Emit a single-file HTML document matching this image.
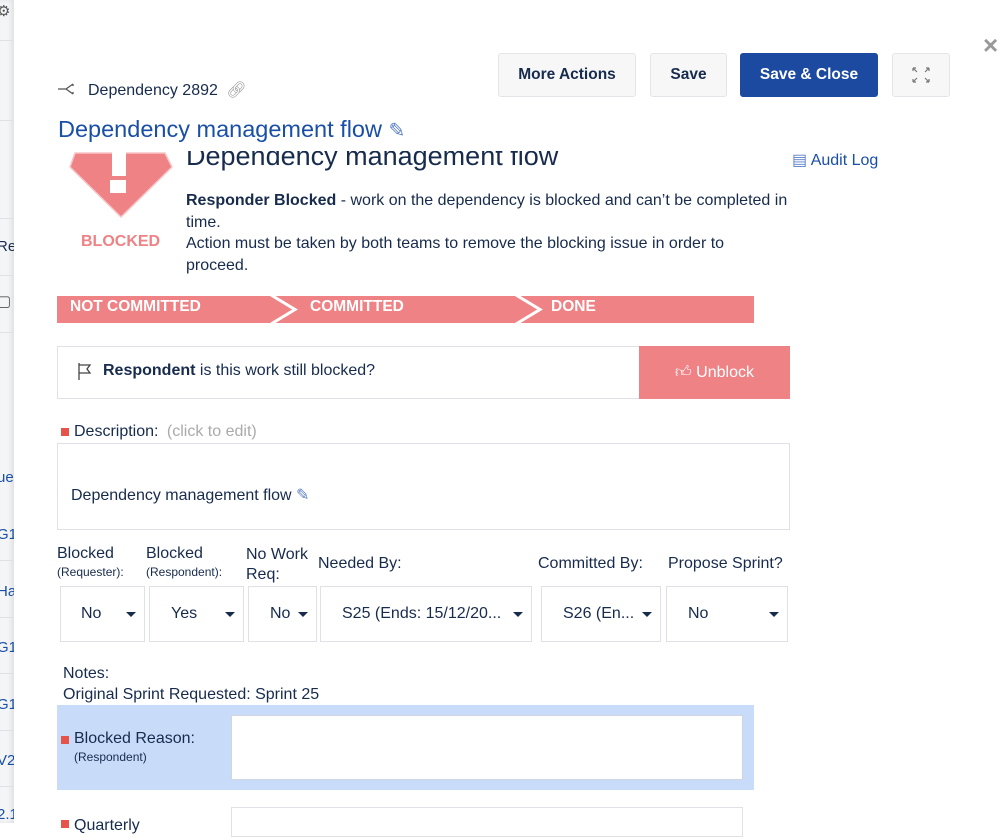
<!DOCTYPE html>
<html><head><style>
*{box-sizing:border-box;margin:0;padding:0}
body{width:999px;height:823px;overflow:hidden;background:#fff;font-family:"Liberation Sans",sans-serif;color:#172b4d;position:relative}
.a{position:absolute}
.strip{left:0;top:0;width:14px;height:823px;background:#f4f5f7;overflow:hidden;box-shadow:inset -3px 0 4px rgba(0,0,0,.08)}
.strip div{position:absolute;left:-3px;font-size:15px;color:#1a4fa8;white-space:nowrap}
.strip hr{position:absolute;left:0;width:14px;border:0;border-top:1px solid #dfe1e6}
.btn{position:absolute;top:53px;height:44px;border:1px solid #e4e5e8;background:#f7f7f8;border-radius:3px;font-size:15.5px;font-weight:bold;display:flex;align-items:center;justify-content:center}
.sel{position:absolute;top:586px;height:56px;border:1px solid #dfe1e6;font-size:16px;display:flex;align-items:center}
.sel .c{position:absolute;right:8px;top:25px;width:0;height:0;border-left:5px solid transparent;border-right:5px solid transparent;border-top:5px solid #172b4d}
.lbl{position:absolute;font-size:16px}
.sm{font-size:12px}
</style></head><body>
<div class="a strip">
<hr style="top:40px"><hr style="top:120px"><hr style="top:218px"><hr style="top:275px"><hr style="top:332px"><hr style="top:560px"><hr style="top:617px"><hr style="top:673px"><hr style="top:730px"><hr style="top:786px">
<div style="top:2px;color:#555">⚙</div>
<div style="top:238px;color:#172b4d">Re</div>
<div style="top:292px;color:#555">▢</div>
<div style="top:469px">ue</div>
<div style="top:526px">G1</div>
<div style="top:583px">Ha</div>
<div style="top:639px">G1</div>
<div style="top:696px">G1</div>
<div style="top:752px">V2</div>
<div style="top:806px">2.1</div>
</div>
<div class="a" style="left:983px;top:30px;font-size:26px;color:#999;font-weight:bold">×</div>

<div class="btn" style="left:498px;width:138px">More Actions</div>
<div class="btn" style="left:650px;width:77px">Save</div>
<div class="btn" style="left:740px;width:138px;background:#1c4aa0;border-color:#1c4aa0;color:#fff">Save &amp; Close</div>
<div class="btn" style="left:892px;width:58px"><svg width="18" height="16" viewBox="0 0 18 16" fill="none" stroke="#777" stroke-width="1.2"><path d="M1 1l4 4M1 1h3M1 1v3M17 1l-4 4M17 1h-3M17 1v3M1 15l4-4M1 15h3M1 15v-3M17 15l-4-4M17 15h-3M17 15v-3"/></svg></div>

<svg class="a" style="left:58px;top:83px" width="18" height="12" viewBox="0 0 18 12" fill="none" stroke="#555" stroke-width="1.3"><path d="M0 6h8M8 6l7-5M8 6l7 5M15 1v2M15 11v-2"/></svg>
<div class="a" style="left:88px;top:80px;font-size:16px">Dependency 2892 <span style="color:#999;margin-left:4px">🔗︎</span></div>
<div class="a" style="left:58px;top:116px;font-size:23.5px;color:#1a4fa8">Dependency management flow <span style="color:#5a7fc8;font-size:20px">✎</span></div>

<div class="a" style="left:0;top:147px;width:999px;height:676px;overflow:hidden">
 <div class="a" style="left:186px;top:-6px;font-size:27px;color:#172b4d">Dependency management flow</div>
 <div class="a" style="left:180px;top:0;width:400px;height:4px;background:#fff"></div>
 <svg class="a" style="left:68px;top:0" width="106" height="72" viewBox="0 0 106 72"><path d="M7 6 L97 6 L104 20 L53 70 L2 20 Z" fill="#ef8285" stroke="#f7c6c7" stroke-width="1.5" stroke-linejoin="round"/><rect x="44" y="0" width="14" height="29" fill="#fff"/><rect x="42" y="33" width="16" height="13" fill="#fff"/></svg>
 <div class="a" style="left:81px;top:86px;font-size:16px;font-weight:bold;color:#ef8285">BLOCKED</div>
 <div class="a" style="left:186px;top:43px;width:602px;font-size:16px;line-height:21.5px"><b>Responder Blocked</b> - work on the dependency is blocked and can’t be completed in time.<br>Action must be taken by both teams to remove the blocking issue in order to proceed.</div>
 <div class="a" style="left:792px;top:3px;font-size:16px;color:#1a4fa8"><span style="color:#5a7fc8">▤</span> Audit Log</div>

 <svg class="a" style="left:57px;top:149px" width="697" height="27"><rect width="697" height="27" fill="#ef8285"/><polyline points="214,-1 238,13.5 214,28" fill="none" stroke="#fff" stroke-width="3"/><polyline points="459,-1 483,13.5 459,28" fill="none" stroke="#fff" stroke-width="3"/></svg>
 <div class="a" style="left:70px;top:151px;font-size:15.5px;font-weight:bold;color:#fff">NOT COMMITTED</div>
 <div class="a" style="left:310px;top:151px;font-size:15.5px;font-weight:bold;color:#fff">COMMITTED</div>
 <div class="a" style="left:551px;top:151px;font-size:15.5px;font-weight:bold;color:#fff">DONE</div>

 <div class="a" style="left:57px;top:199px;width:733px;height:53px;border:1px solid #dfe1e6"></div>
 <svg class="a" style="left:78px;top:216px" width="14" height="17" viewBox="0 0 14 17" fill="none" stroke="#444" stroke-width="1.3"><path d="M1 0v17M1 2h11l-3 4 3 4H1"/></svg>
 <div class="a" style="left:103px;top:215px;font-size:16px"><b>Respondent</b> is this work still blocked?</div>
 <div class="a" style="left:639px;top:199px;width:151px;height:53px;background:#ef8285;color:#fff;font-size:16px;display:flex;align-items:center;justify-content:center">👍︎&nbsp;Unblock</div>

 <div class="a" style="left:61px;top:281px;width:8px;height:8px;background:#e5534b"></div>
 <div class="a" style="left:74px;top:276px;font-size:16px">Description: <span style="color:#aaa;margin-left:4px">(click to edit)</span></div>
 <div class="a" style="left:57px;top:296px;width:733px;height:87px;border:1px solid #dfe1e6"></div>
 <div class="a" style="left:71px;top:338px;font-size:16px">Dependency management flow <span style="color:#5a7fc8">✎</span></div>

 <div class="lbl" style="left:57px;top:398px">Blocked<br><span class="sm">(Requester):</span></div>
 <div class="lbl" style="left:146px;top:398px">Blocked<br><span class="sm">(Respondent):</span></div>
 <div class="lbl" style="left:246px;top:398px;line-height:20px">No Work<br>Req:</div>
 <div class="lbl" style="left:318px;top:408px">Needed By:</div>
 <div class="lbl" style="left:538px;top:408px">Committed By:</div>
 <div class="lbl" style="left:668px;top:408px">Propose Sprint?</div>
</div>
<div class="sel" style="left:60px;width:85px;padding-left:20px">No<span class="c"></span></div>
<div class="sel" style="left:149px;width:95px;padding-left:21px">Yes<span class="c"></span></div>
<div class="sel" style="left:248px;width:69px;padding-left:21px">No<span class="c"></span></div>
<div class="sel" style="left:320px;width:212px;padding-left:21px">S25 (Ends: 15/12/20...<span class="c"></span></div>
<div class="sel" style="left:541px;width:120px;padding-left:21px">S26 (En...<span class="c"></span></div>
<div class="sel" style="left:666px;width:122px;padding-left:21px">No<span class="c"></span></div>

<div class="a" style="left:63px;top:663px;font-size:16px;line-height:21px">Notes:<br>Original Sprint Requested: Sprint 25</div>
<div class="a" style="left:57px;top:705px;width:697px;height:85px;background:#c8dbf8"></div>
<div class="a" style="left:231px;top:715px;width:512px;height:65px;background:#fff;border:1px solid #cfd6e0"></div>
<div class="a" style="left:61px;top:736px;width:8px;height:8px;background:#e5534b"></div>
<div class="a" style="left:74px;top:730px;font-size:16px">Blocked Reason:<br><span class="sm">(Respondent)</span></div>
<div class="a" style="left:231px;top:807px;width:512px;height:30px;border:1px solid #dfe1e6"></div>
<div class="a" style="left:61px;top:820px;width:8px;height:8px;background:#e5534b"></div>
<div class="a" style="left:74px;top:817px;font-size:16px">Quarterly</div>
</body></html>
